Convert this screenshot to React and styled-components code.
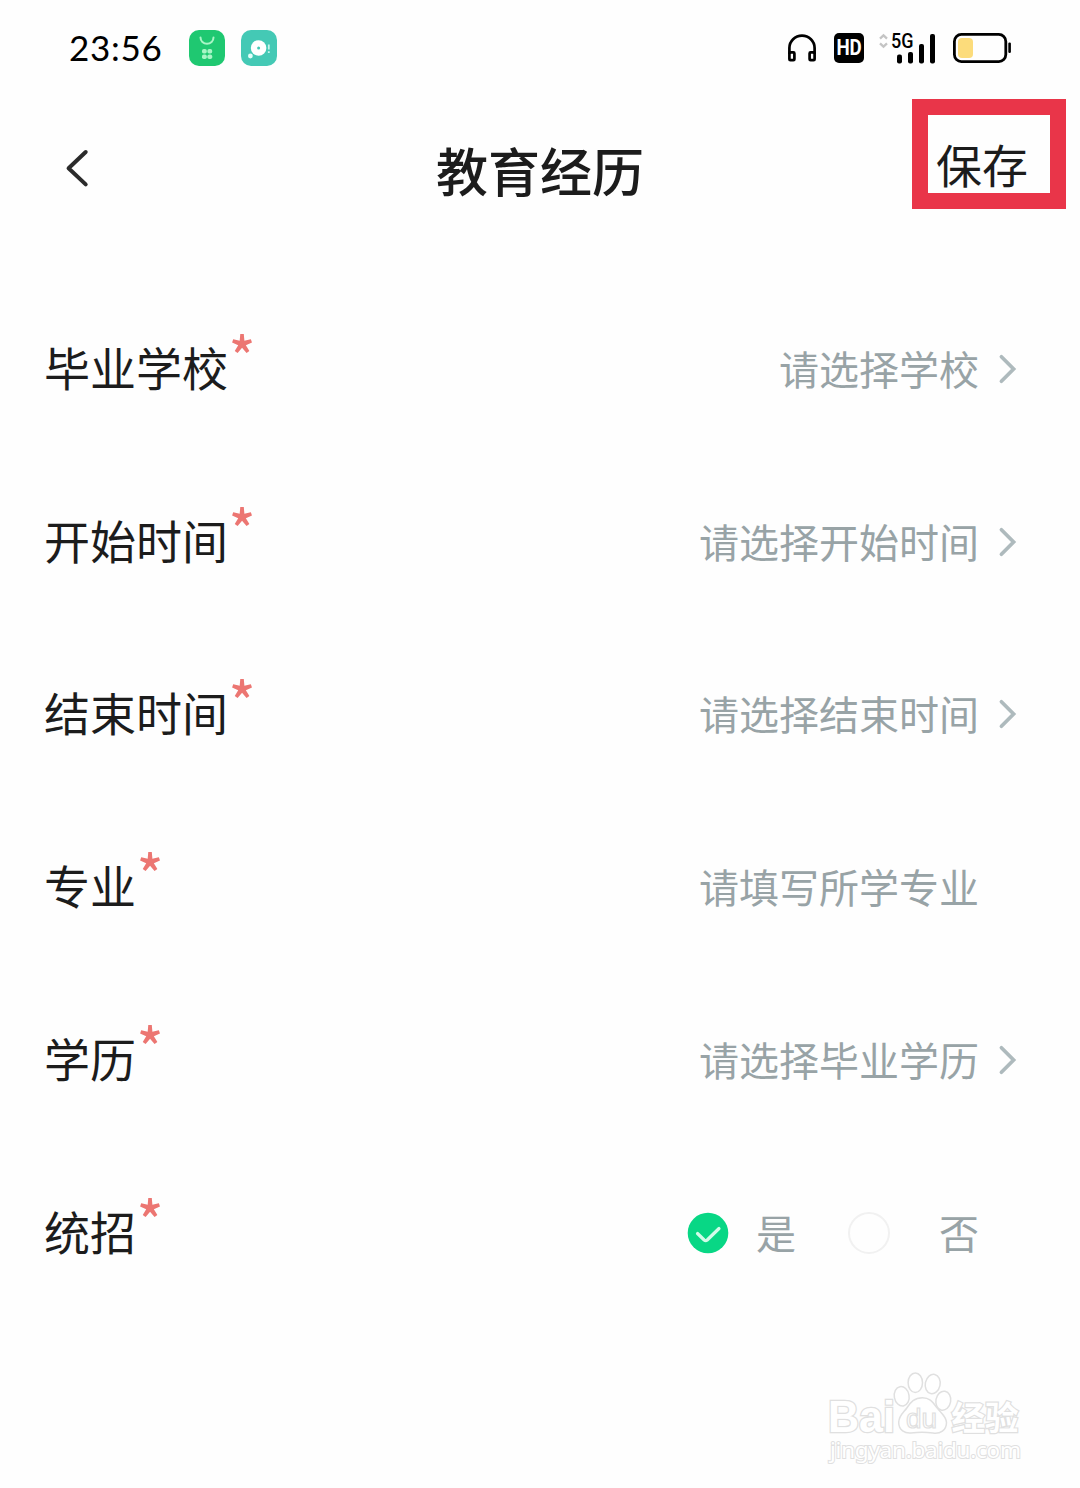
import React, { useState } from 'react';

import styled, { createGlobalStyle } from 'styled-components';

const FIELDS = [
  { label: '毕业学校', hint: '请选择学校', arrow: true },
  { label: '开始时间', hint: '请选择开始时间', arrow: true },
  { label: '结束时间', hint: '请选择结束时间', arrow: true },
  { label: '专业', hint: '请填写所学专业', arrow: false },
  { label: '学历', hint: '请选择毕业学历', arrow: true },
];

const ShopIcon = () => (
  <svg width="36" height="36" viewBox="0 0 36 36">
    <rect width="36" height="36" rx="10" fill="#1fc871" />
    <path
      d="M11.5 7.5a6.5 6.3 0 0 0 13 0"
      fill="none"
      stroke="#a9f5c6"
      strokeWidth="2"
      strokeLinecap="round"
    />
    <g fill="#a9f5c6">
      <rect x="13" y="19" width="4.8" height="4.6" rx="1.8" />
      <rect x="18.4" y="19" width="4.8" height="4.6" rx="1.8" />
      <rect x="13" y="24.4" width="4.8" height="4.6" rx="1.8" />
      <rect x="18.4" y="24.4" width="4.8" height="4.6" rx="1.8" />
    </g>
  </svg>
);

const ChatIcon = () => (
  <svg width="36" height="36" viewBox="0 0 36 36">
    <rect width="36" height="36" rx="10" fill="#44c9b5" />
    <circle cx="17.6" cy="18" r="7.8" fill="#fff" />
    <circle cx="17.6" cy="18" r="1.5" fill="#44c9b5" />
    <circle cx="9.4" cy="26" r="2.4" fill="#e4fffa" />
    <path d="M27.8 14.5v5M27.8 21.2v1.8" stroke="#c6f5ec" strokeWidth="1.8" />
  </svg>
);

const HeadphonesIcon = () => (
  <svg width="28" height="28" viewBox="1 0 28 28">
    <g fill="none" stroke="#000" strokeWidth="2.7">
      <path d="M2.4 20V14a12.6 12.4 0 0 1 25.2 0v6" />
      <rect x="2.4" y="18.4" width="5" height="7.8" rx="1" />
      <rect x="22.6" y="18.4" width="5" height="7.8" rx="1" />
    </g>
  </svg>
);

const HdIcon = () => (
  <svg width="30" height="30" viewBox="0 0 30 30">
    <rect width="30" height="30" rx="5" fill="#000" />
    <text
      x="2.4"
      y="22.4"
      fill="#fff"
      fontFamily="Roboto, sans-serif"
      fontSize="21.5"
      fontWeight="700"
      textLength="25.4"
      lengthAdjust="spacingAndGlyphs"
    >
      HD
    </text>
  </svg>
);

const SignalIcon = () => (
  <svg width="57" height="32" viewBox="0 0 57 32">
    <path
      d="M1 6.6l3.5-3.3L8 6.6M1 11.4l3.5 3.3L8 11.4"
      fill="none"
      stroke="#c4c4c4"
      strokeWidth="2.3"
    />
    <text
      x="12"
      y="16"
      fill="#000"
      fontFamily="Roboto, sans-serif"
      fontSize="20"
      fontWeight="500"
      textLength="22.5"
      lengthAdjust="spacingAndGlyphs"
    >
      5G
    </text>
    <g fill="#000">
      <rect x="18" y="22.6" width="5" height="9" rx="2" />
      <rect x="29" y="20" width="5" height="11.6" rx="2" />
      <rect x="40" y="12" width="5" height="19.6" rx="2" />
      <rect x="51" y="2" width="5" height="29.6" rx="2" />
    </g>
  </svg>
);

const BatteryIcon = () => (
  <svg width="58" height="30" viewBox="0 0 58 30">
    <rect
      x="1.4"
      y="1.4"
      width="51.4"
      height="27.2"
      rx="7"
      fill="none"
      stroke="#000"
      strokeWidth="2.8"
    />
    <rect x="5" y="5" width="15" height="20" rx="4" fill="#fcdc7b" />
    <rect x="55.3" y="9.6" width="2.6" height="10.4" rx="1.2" fill="#000" />
  </svg>
);

const BackIcon = () => (
  <svg width="24" height="40" viewBox="0 0 24 40">
    <path
      d="M20.7 3L3.6 19.3 20.7 35.4"
      fill="none"
      stroke="#2b2b2b"
      strokeWidth="4"
      strokeLinecap="round"
      strokeLinejoin="round"
    />
  </svg>
);

const ArrowIcon = () => (
  <svg width="18" height="30" viewBox="0 0 18 30">
    <path
      d="M2.4 2.8L14.6 15 2.4 27.2"
      fill="none"
      stroke="#aebabd"
      strokeWidth="3.7"
      strokeLinecap="round"
    />
  </svg>
);

const CheckIcon = () => (
  <svg width="42" height="42" viewBox="0 0 42 42">
    <circle cx="21" cy="21" r="20.3" fill="#08d785" />
    <path
      d="M10.5 21.5l6.7 6.5c1 .9 2 .9 3 0L32 16.5"
      fill="none"
      stroke="#d2fbe9"
      strokeWidth="3.2"
      strokeLinecap="round"
      strokeLinejoin="round"
    />
  </svg>
);

const BrandMark = () => (
  <svg width="202" height="100" viewBox="0 0 202 100">
    <g
      fill="#fff"
      stroke="#e0e0e0"
      strokeWidth="1.5"
      fontFamily="'Liberation Sans', sans-serif"
    >
      <text
        x="4"
        y="61"
        fontSize="44.5"
        fontWeight="700"
        textLength="67"
        lengthAdjust="spacingAndGlyphs"
        paintOrder="stroke"
        strokeWidth="2.6"
      >
        Bai
      </text>
      <ellipse cx="77.7" cy="25.3" rx="7.4" ry="9.8" transform="rotate(-10 77.7 25.3)" />
      <ellipse cx="91.3" cy="11.7" rx="7.2" ry="9.8" />
      <ellipse cx="108.7" cy="13" rx="7.4" ry="9.8" transform="rotate(12 108.7 13)" />
      <ellipse cx="119.3" cy="29.7" rx="7.4" ry="9.6" transform="rotate(10 119.3 29.7)" />
      <path d="M98.5 26.8c-9 0-12 5-15.5 10-3.5 5-8 7.5-8.3 14.5 0 8 6.3 11.2 12.3 10.7 7-1 15-1 22 0 7 1 13.5-2.5 13.5-10.5 0-6-5.5-9.5-9.5-14.7-4-5-6.5-10-14.500-10z" />
      <text x="82" y="57" fontSize="28" textLength="31" strokeWidth="1.2">
        du
      </text>
      <text
        x="127.500"
        y="59"
        fontSize="33.5"
        fontWeight="700"
        textLength="67"
        fontFamily="'Noto Sans CJK SC', sans-serif"
        paintOrder="stroke"
        strokeWidth="2.4"
      >
        经验
      </text>
      <text
        x="6"
        y="87"
        fontSize="22.5"
        textLength="191"
        fontFamily="'Noto Sans', sans-serif"
        paintOrder="stroke"
        strokeWidth="2"
      >
        jingyan.baidu.com
      </text>
    </g>
  </svg>
);

const App = () => {
  const [unified, setUnified] = useState(true);

  return (
    <Page>
      <GlobalStyle />
      <StatusBar>
        <StatusGroup>
          <Clock>23:56</Clock>
          <AppIcons>
            <ShopIcon />
            <ChatIcon />
          </AppIcons>
        </StatusGroup>
        <Indicators>
          <HeadphonesIcon />
          <HdIcon />
          <SignalIcon />
          <BatteryIcon />
        </Indicators>
      </StatusBar>
      <Header>
        <BackButton aria-label="返回">
          <BackIcon />
        </BackButton>
        <Title>教育经历</Title>
        <SaveButton>
          保存
          <Highlight />
        </SaveButton>
      </Header>
      <Form>
        {FIELDS.map(({ label, hint, arrow }) => (
          <Row key={label}>
            <Label>
              {label}
              <Required>*</Required>
            </Label>
            <Hint>{hint}</Hint>
            <ArrowSlot>{arrow && <ArrowIcon />}</ArrowSlot>
          </Row>
        ))}
        <Row>
          <Label>
            统招
            <Required>*</Required>
          </Label>
          <Option onClick={() => setUnified(true)}>
            {unified ? <CheckIcon /> : <EmptyCircle />}
            <Answer $gap="27px">是</Answer>
          </Option>
          <Option onClick={() => setUnified(false)}>
            {unified ? <EmptyCircle /> : <CheckIcon />}
            <Answer $gap="49px">否</Answer>
          </Option>
          <ArrowSlot />
        </Row>
      </Form>
      <Watermark>
        <BrandMark />
      </Watermark>
    </Page>
  );
};

const GlobalStyle = createGlobalStyle`
  * {
    box-sizing: border-box;
  }
  body {
    margin: 0;
    background: #fefefe;
  }
  svg {
    display: block;
    flex-shrink: 0;
    overflow: visible;
  }
`;

const Page = styled.div`
  position: relative;
  width: 1080px;
  height: 1488px;
  overflow: hidden;
  background-color: #fefefe;
  color: #1c1c1c;
  font-family: 'Noto Sans CJK SC', sans-serif;
`;

const StatusBar = styled.div`
  display: flex;
  align-items: center;
  justify-content: space-between;
  height: 96px;
  padding: 0 69px;
`;

const StatusGroup = styled.div`
  display: flex;
  align-items: center;
`;

const Clock = styled.span`
  width: 120px;
  margin-bottom: 2px;
  color: #000;
  font-family: Lato, sans-serif;
  font-size: 35px;
  line-height: 40px;
  letter-spacing: 0.7px;
`;

const AppIcons = styled.div`
  display: flex;
  gap: 16px;
`;

const Indicators = styled.div`
  display: flex;
  align-items: center;

  svg + svg {
    margin-left: 17px;
  }
  svg:nth-child(2) {
    margin-left: 18px;
  }
  svg:nth-child(3) {
    margin-left: 15px;
  }
`;

const Header = styled.header`
  display: grid;
  grid-template-columns: 1fr auto 1fr;
  align-items: center;
  height: 146px;
  padding: 0 52px 0 65px;
`;

const BackButton = styled.button`
  justify-self: start;
  padding: 0;
  border: none;
  background: none;
`;

const Title = styled.h1`
  margin: 1px 0 0 -13px;
  font-size: 52px;
  font-weight: 500;
  line-height: 60px;
`;

const SaveButton = styled.button`
  position: relative;
  justify-self: end;
  margin-bottom: 13px;
  padding: 0;
  border: none;
  background: none;
  color: inherit;
  font: inherit;
  font-size: 46px;
  line-height: 60px;
`;

const Highlight = styled.span`
  position: absolute;
  top: -34px;
  right: -38px;
  width: 154px;
  height: 110px;
  border: 16px solid #e93549;
  pointer-events: none;
`;

const Form = styled.div`
  padding-top: 40.5px;
`;

const Row = styled.div`
  display: flex;
  align-items: center;
  height: 172.8px;
  padding: 0 63px 0 44px;
`;

const Label = styled.label`
  display: flex;
  flex: 1;
  margin-bottom: 6px;
  font-size: 46px;
  line-height: 60px;
`;

const Required = styled.span`
  margin: -12px 0 12px 1px;
  color: #ec7672;
  font-size: 54px;
  font-weight: 500;
`;

const Hint = styled.span`
  margin-bottom: 2px;
  color: #98a3a6;
  font-size: 40px;
  line-height: 60px;
`;

const ArrowSlot = styled.span`
  display: flex;
  justify-content: flex-end;
  width: 38px;
`;

const Option = styled.div`
  display: flex;
  align-items: center;

  & + & {
    margin-left: 52px;
  }
`;

const Answer = styled.span`
  margin: 0 0 2px ${({ $gap }) => $gap};
  color: #98a3a6;
  font-size: 40px;
  line-height: 60px;
`;

const EmptyCircle = styled.span`
  width: 42px;
  height: 42px;
  border: 2px solid #f1f1f1;
  border-radius: 50%;
`;

const Watermark = styled.div`
  position: absolute;
  right: 54px;
  bottom: 17px;
`;

export default App;
